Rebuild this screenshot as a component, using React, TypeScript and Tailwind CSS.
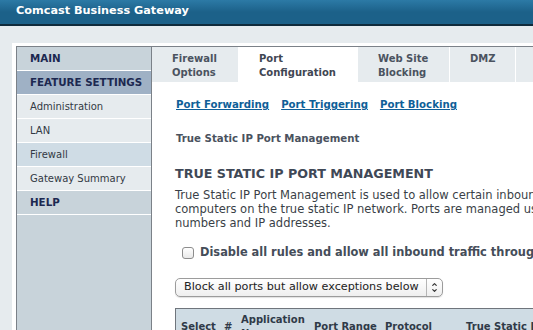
import { ChevronDown, ChevronUp } from 'lucide-react';

const sideItems = [
  { label: 'MAIN', kind: 'head' },
  { label: 'FEATURE SETTINGS', kind: 'active-head' },
  { label: 'Administration', kind: 'item' },
  { label: 'LAN', kind: 'item' },
  { label: 'Firewall', kind: 'current' },
  { label: 'Gateway Summary', kind: 'item' },
  { label: 'HELP', kind: 'head' },
];

const rowClass: Record<string, string> = {
  head: 'bg-[#c8d3da] font-bold text-[10.3px] text-[#1c2850]',
  'active-head': 'bg-[#9fb1c5] font-bold text-[10.3px] text-[#1c2850]',
  item: 'bg-[#e6ebee] text-[10px] text-[#333a44]',
  current: 'bg-[#cfdce5] text-[10px] text-[#333a44]',
};

const tabs = [
  { label: ['Firewall', 'Options'], w: 'w-[86px]', active: false },
  { label: ['Port', 'Configuration'], w: 'w-[119px]', active: true },
  { label: ['Web Site', 'Blocking'], w: 'w-[92px]', active: false },
  { label: ['DMZ'], w: 'w-[66px]', active: false },
  { label: [], w: 'w-[110px]', active: false },
];

const Sidebar = () => (
  <div className="w-[135px] shrink-0 bg-[#c8d3da] border-r border-[#7b8188]">
    {sideItems.map((item) => (
      <div
        key={item.label}
        className={`h-[24px] flex items-center pl-[13px] border-b border-white ${rowClass[item.kind]}`}
      >
        {item.label}
      </div>
    ))}
  </div>
);

const Tabs = () => (
  <div className="flex h-[35px] bg-[#e6ebee]">
    {tabs.map((tab, i) => (
      <div
        key={i}
        className={`${tab.w} shrink-0 pl-5 pt-[5px] text-[10px] leading-[14px] font-bold ${
          i > 0 ? 'border-l border-white' : ''
        } ${tab.active ? 'bg-white text-[#3f4653]' : 'text-[#4b5360]'}`}
      >
        {tab.label.map((l) => (
          <div key={l}>{l}</div>
        ))}
      </div>
    ))}
  </div>
);

const SelectBox = () => (
  <div className="mt-[18px] w-[268px] h-[19px] flex items-center rounded-[5px] border border-[#9c9c9c] bg-gradient-to-b from-white to-[#efefef] shadow-[0_1px_1px_rgba(0,0,0,0.12)]">
    <span className="flex-1 pl-2 text-[11.2px] text-[#222]">Block all ports but allow exceptions below</span>
    <span className="w-[16px] h-full border-l border-[#b5b5b5] flex flex-col items-center justify-center text-[#333]">
      <ChevronUp size={7} strokeWidth={4} className="-mb-[1px]" />
      <ChevronDown size={7} strokeWidth={4} />
    </span>
  </div>
);

const cols = [
  { label: ['Select'], w: 'w-[43px]' },
  { label: ['#'], w: 'w-[17px]' },
  { label: ['Application', 'Name'], w: 'w-[73px]' },
  { label: ['Port Range'], w: 'w-[71px]' },
  { label: ['Protocol'], w: 'w-[81px]' },
  { label: ['True Static IP'], w: 'w-[120px]' },
];

const App = () => (
  <div className="w-[533px] h-[330px] overflow-hidden bg-[#e6ebee] font-['DejaVu_Sans',sans-serif]">
    <header className="h-[26px] bg-gradient-to-b from-[#2c7aa6] via-[#1c6189] to-[#1c6189] border-b-2 border-[#102b3b] pl-4 flex items-center">
      <span className="text-white font-bold text-[11.25px] pb-[1px]">Comcast Business Gateway</span>
    </header>
    <div className="pl-[12px] pt-[17px]">
      <div className="w-[900px] h-[400px] bg-white pl-1 pt-[3px]">
        <div className="flex h-full border-t border-l border-[#7b8188]">
          <Sidebar />
          <main className="flex-1 bg-white">
            <Tabs />
            <div className="pl-[23px] text-[#3f4856]">
              <div className="mt-[17px] ml-px flex gap-3 text-[10.2px] leading-[12px] font-bold text-[#0f5f98]">
                <a className="underline">Port Forwarding</a>
                <a className="underline">Port Triggering</a>
                <a className="underline">Port Blocking</a>
              </div>
              <div className="mt-[22px] ml-px text-[10.2px] leading-[12px] font-bold text-[#4a525e]">
                True Static IP Port Management
              </div>
              <h1 className="mt-[21px] text-[12.7px] leading-[16px] font-bold text-[#3f4856]">
                TRUE STATIC IP PORT MANAGEMENT
              </h1>
              <p className="mt-[6px] text-[11.5px] leading-[14px] text-[#3a3f47] whitespace-nowrap">
                True Static IP Port Management is used to allow certain inbound traffic to reach
                <br />
                computers on the true static IP network. Ports are managed using port
                <br />
                numbers and IP addresses.
              </p>
              <label className="mt-4 ml-[7px] h-[14px] flex items-center gap-[6px] text-[11.4px] font-bold text-[#454d59] whitespace-nowrap">
                <span className="w-[12px] h-[12px] rounded-[3px] border border-[#8d8d8d] bg-gradient-to-b from-white to-[#e9e9e9]" />
                Disable all rules and allow all inbound traffic through the firewall
              </label>
              <SelectBox />
              <div className="mt-[11px] w-[600px] border-t border-l border-[#6f757c] bg-[#cfdce4] flex items-center h-[36px] text-[10px] leading-[14px] font-bold text-[#2f3a48]">
                {cols.map((c) => (
                  <div key={c.label.join(' ')} className={`${c.w} shrink-0 pl-[5px]`}>
                    {c.label.map((l) => (
                      <div key={l}>{l}</div>
                    ))}
                  </div>
                ))}
              </div>
            </div>
          </main>
        </div>
      </div>
    </div>
  </div>
);

export default App;
